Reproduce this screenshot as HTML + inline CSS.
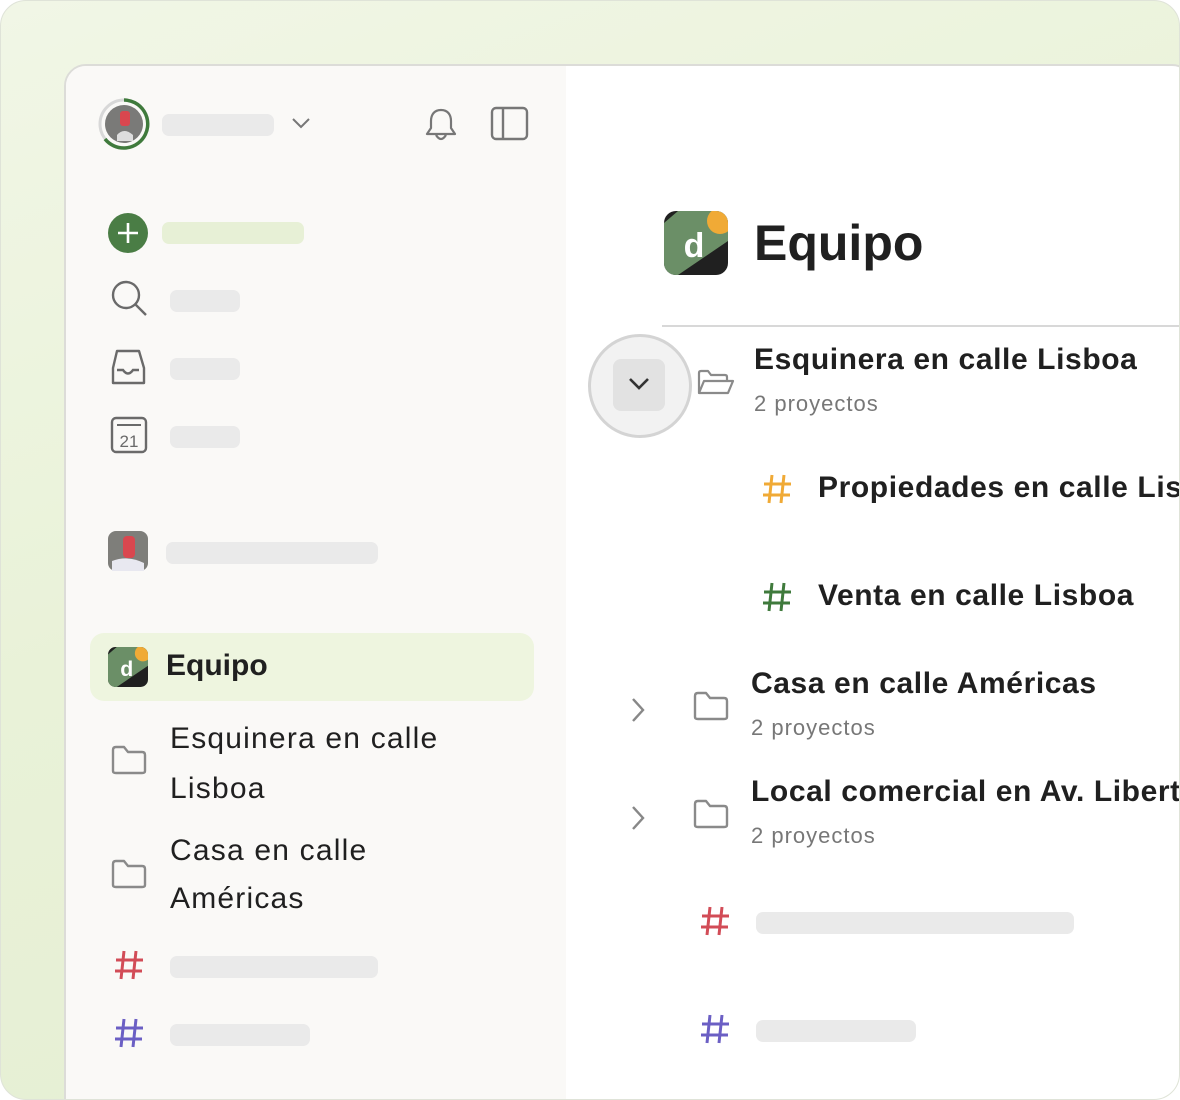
<!DOCTYPE html>
<html><head><meta charset="utf-8"><style>
*{margin:0;padding:0;box-sizing:border-box}
body{width:1180px;height:1100px;overflow:hidden;font-family:"Liberation Sans",sans-serif;color:#202020;background:#fff}
.outer{position:absolute;left:0;top:0;width:1180px;height:1100px;border-radius:26px;overflow:hidden;
 background:linear-gradient(160deg,#f1f6e6 0%,#e9f2d8 45%,#e4edd2 100%);border:1px solid #dfe3d8}
.card{position:absolute;left:63px;top:63px;width:1130px;height:1060px;border-radius:22px;background:#fff;border:2px solid #dcdcd8;overflow:hidden}
.side{position:absolute;left:0;top:0;width:500px;height:100%;background:#faf9f7}
.abs{position:absolute}
.bar{position:absolute;background:#eaeaea;border-radius:7px;height:22px}
.t{position:absolute;white-space:nowrap}
.sub{font-size:22px;color:#777;letter-spacing:1px}
.h{font-size:30px;font-weight:bold;letter-spacing:.6px}
</style></head><body>
<div class="outer">
<div class="card">
 <div class="side">
  <svg class="abs" style="left:31px;top:31px" width="54" height="54" viewBox="0 0 54 54">
   <circle cx="27" cy="27" r="24" fill="none" stroke="#d8d8d8" stroke-width="3"/>
   <path d="M27 3 A24 24 0 1 1 8 42" fill="none" stroke="#3f7a3c" stroke-width="3.5"/>
   <circle cx="27" cy="27" r="19" fill="#7a7a78"/>
   <path d="M20 38 Q27 30 36 38 L36 44 L20 44Z" fill="#ddd"/>
   <rect x="23" y="14" width="10" height="15" rx="3" fill="#d9474f"/>
  </svg>
  <div class="bar" style="left:96px;top:48px;width:112px"></div>
  <svg class="abs" style="left:224px;top:50px" width="22" height="14"><path d="M3 3 L11 11 L19 3" fill="none" stroke="#777" stroke-width="2"/></svg>
  <svg class="abs" style="left:358px;top:40px" width="34" height="38" viewBox="0 0 34 38"><path d="M17 4 C10 4 7 9 7 15 L7 22 L3 28 L31 28 L27 22 L27 15 C27 9 24 4 17 4Z M12 29 Q17 37 22 29" fill="none" stroke="#777" stroke-width="2.2" stroke-linejoin="round"/></svg>
  <svg class="abs" style="left:424px;top:40px" width="40" height="36"><rect x="2" y="2" width="35" height="31" rx="4" fill="none" stroke="#777" stroke-width="2.4"/><line x1="13" y1="2" x2="13" y2="33" stroke="#777" stroke-width="2.4"/></svg>
  <svg class="abs" style="left:41px;top:146px" width="42" height="42"><circle cx="21" cy="21" r="20" fill="#4a7d45"/><path d="M21 11V31M11 21H31" stroke="#fff" stroke-width="2.6"/></svg>
  <div class="bar" style="left:96px;top:156px;width:142px;background:#e7f0d6"></div>
  <svg class="abs" style="left:43px;top:212px" width="42" height="42"><circle cx="17" cy="17" r="13" fill="none" stroke="#6a6a6a" stroke-width="2.4"/><path d="M26.5 26.5 L37 37" stroke="#6a6a6a" stroke-width="2.4"/></svg>
  <div class="bar" style="left:104px;top:224px;width:70px"></div>
  <svg class="abs" style="left:43px;top:282px" width="42" height="42"><path d="M8 3 L30 3 L35 20 L35 35 L4 35 L4 20Z" fill="none" stroke="#6a6a6a" stroke-width="2.4" stroke-linejoin="round"/><path d="M8 22 L14 22 Q19 29 24 22 L30 22" fill="none" stroke="#6a6a6a" stroke-width="2.4"/></svg>
  <div class="bar" style="left:104px;top:292px;width:70px"></div>
  <svg class="abs" style="left:43px;top:350px" width="42" height="42"><rect x="3" y="2" width="34" height="34" rx="4" fill="none" stroke="#6a6a6a" stroke-width="2.4"/><line x1="8" y1="9" x2="32" y2="9" stroke="#6a6a6a" stroke-width="2"/><text x="20" y="31" font-size="17" text-anchor="middle" fill="#6a6a6a" font-family="Liberation Sans">21</text></svg>
  <div class="bar" style="left:104px;top:360px;width:70px"></div>
  <svg class="abs" style="left:42px;top:465px" width="40" height="40"><rect width="40" height="40" rx="8" fill="#7e7e7a"/><rect x="15" y="5" width="12" height="22" rx="4" fill="#d9474f"/><path d="M4 40 L4 30 Q20 24 36 32 L36 40Z" fill="#e8e8f0"/></svg>
  <div class="bar" style="left:100px;top:476px;width:212px"></div>
  <div class="abs" style="left:24px;top:567px;width:444px;height:68px;background:#eef5df;border-radius:14px"></div>
  <svg class="abs" style="left:42px;top:581px" width="40" height="40" viewBox="0 0 64 64">
   <clipPath id="c1"><rect width="64" height="64" rx="12"/></clipPath>
   <g clip-path="url(#c1)"><rect width="64" height="64" fill="#202020"/><path d="M0 64 L0 12 L14 0 L64 0 L64 30 L14 64Z" fill="#6b8f67"/><circle cx="56" cy="10" r="13" fill="#f0aa36"/></g>
   <text x="30" y="46" font-size="34" font-weight="bold" fill="#fff" text-anchor="middle" font-family="Liberation Sans">d</text>
  </svg>
  <div class="t" style="left:100px;top:583px;font-size:30px;font-weight:bold">Equipo</div>
  <svg class="abs" style="left:44px;top:678px" width="38" height="32"><path d="M3 6 Q3 3 6 3 L14 3 L18 8 L32 8 Q35 8 35 11 L35 27 Q35 29 32 29 L6 29 Q3 29 3 27Z" fill="none" stroke="#8a8a8a" stroke-width="2.4" stroke-linejoin="round"/></svg>
  <div class="t" style="left:104px;top:648px;font-size:30px;line-height:50px;letter-spacing:1.2px">Esquinera en calle<br>Lisboa</div>
  <svg class="abs" style="left:44px;top:792px" width="38" height="32"><path d="M3 6 Q3 3 6 3 L14 3 L18 8 L32 8 Q35 8 35 11 L35 27 Q35 29 32 29 L6 29 Q3 29 3 27Z" fill="none" stroke="#8a8a8a" stroke-width="2.4" stroke-linejoin="round"/></svg>
  <div class="t" style="left:104px;top:761px;font-size:30px;line-height:48px;letter-spacing:1.2px">Casa en calle<br>Américas</div>
  <svg class="abs" style="left:46px;top:882px" width="34" height="34"><path d="M12 3 L9 31 M24 3 L21 31 M4 12 L31 12 M3 23 L30 23" stroke="#d24c57" stroke-width="3"/></svg>
  <div class="bar" style="left:104px;top:890px;width:208px"></div>
  <svg class="abs" style="left:46px;top:950px" width="34" height="34"><path d="M12 3 L9 31 M24 3 L21 31 M4 12 L31 12 M3 23 L30 23" stroke="#6b5fc4" stroke-width="3"/></svg>
  <div class="bar" style="left:104px;top:958px;width:140px"></div>
 </div>
 <svg class="abs" style="left:598px;top:145px" width="64" height="64" viewBox="0 0 64 64">
   <clipPath id="c2"><rect width="64" height="64" rx="12"/></clipPath>
   <g clip-path="url(#c2)"><rect width="64" height="64" fill="#202020"/><path d="M0 64 L0 12 L14 0 L64 0 L64 30 L14 64Z" fill="#6b8f67"/><circle cx="56" cy="10" r="13" fill="#f0aa36"/></g>
   <text x="30" y="46" font-size="34" font-weight="bold" fill="#fff" text-anchor="middle" font-family="Liberation Sans">d</text>
 </svg>
 <div class="t" style="left:688px;top:148px;font-size:50px;font-weight:bold">Equipo</div>
 <div class="abs" style="left:596px;top:259px;width:600px;height:2px;background:#d8d8d8"></div>
 <div class="abs" style="left:522px;top:268px;width:104px;height:104px;border-radius:50%;background:#f2f2f2;border:3px solid #d4d4d4"></div>
 <div class="abs" style="left:547px;top:293px;width:52px;height:52px;border-radius:8px;background:#e2e2e2"></div>
 <svg class="abs" style="left:561px;top:310px" width="24" height="16"><path d="M3 3 L12 12 L21 3" fill="none" stroke="#333" stroke-width="2.6"/></svg>
 <svg class="abs" style="left:630px;top:302px" width="40" height="30"><path d="M3 25 L3 5 Q3 3 5 3 L12 3 L15 7 L29 7 Q31 7 31 9 L31 12 M3 25 L8 13 L37 13 L32 25Z" fill="none" stroke="#8a8a8a" stroke-width="2.2" stroke-linejoin="round"/></svg>
 <div class="t h" style="left:688px;top:277px">Esquinera en calle Lisboa</div>
 <div class="t sub" style="left:688px;top:325px">2 proyectos</div>
 <svg class="abs" style="left:694px;top:406px" width="34" height="34"><path d="M12 3 L9 31 M24 3 L21 31 M4 12 L31 12 M3 23 L30 23" stroke="#f0aa36" stroke-width="3"/></svg>
 <div class="t h" style="left:752px;top:405px">Propiedades en calle Lisboa</div>
 <svg class="abs" style="left:694px;top:514px" width="34" height="34"><path d="M12 3 L9 31 M24 3 L21 31 M4 12 L31 12 M3 23 L30 23" stroke="#3f7a3c" stroke-width="3"/></svg>
 <div class="t h" style="left:752px;top:513px">Venta en calle Lisboa</div>
 <svg class="abs" style="left:562px;top:630px" width="20" height="30"><path d="M5 3 L15 14 L5 25" fill="none" stroke="#888" stroke-width="2.4"/></svg>
 <svg class="abs" style="left:626px;top:624px" width="38" height="32"><path d="M3 6 Q3 3 6 3 L14 3 L18 8 L32 8 Q35 8 35 11 L35 27 Q35 29 32 29 L6 29 Q3 29 3 27Z" fill="none" stroke="#8a8a8a" stroke-width="2.4" stroke-linejoin="round"/></svg>
 <div class="t h" style="left:685px;top:601px">Casa en calle Américas</div>
 <div class="t sub" style="left:685px;top:649px">2 proyectos</div>
 <svg class="abs" style="left:562px;top:738px" width="20" height="30"><path d="M5 3 L15 14 L5 25" fill="none" stroke="#888" stroke-width="2.4"/></svg>
 <svg class="abs" style="left:626px;top:732px" width="38" height="32"><path d="M3 6 Q3 3 6 3 L14 3 L18 8 L32 8 Q35 8 35 11 L35 27 Q35 29 32 29 L6 29 Q3 29 3 27Z" fill="none" stroke="#8a8a8a" stroke-width="2.4" stroke-linejoin="round"/></svg>
 <div class="t h" style="left:685px;top:709px">Local comercial en Av. Libertad</div>
 <div class="t sub" style="left:685px;top:757px">2 proyectos</div>
 <svg class="abs" style="left:632px;top:838px" width="34" height="34"><path d="M12 3 L9 31 M24 3 L21 31 M4 12 L31 12 M3 23 L30 23" stroke="#d24c57" stroke-width="3"/></svg>
 <div class="bar" style="left:690px;top:846px;width:318px"></div>
 <svg class="abs" style="left:632px;top:946px" width="34" height="34"><path d="M12 3 L9 31 M24 3 L21 31 M4 12 L31 12 M3 23 L30 23" stroke="#6b5fc4" stroke-width="3"/></svg>
 <div class="bar" style="left:690px;top:954px;width:160px"></div>
</div>
</div>
</body></html>
